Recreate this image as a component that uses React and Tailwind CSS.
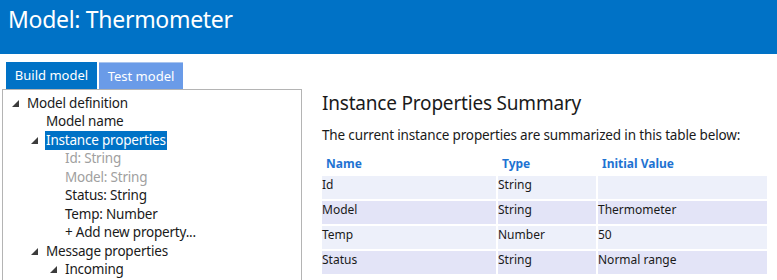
import React from "react";

const font = { fontFamily: '"Noto Sans", "Open Sans", sans-serif' };

function Caret() {
  return (
    <svg width="7" height="7" viewBox="0 0 7 7" className="shrink-0">
      <polygon points="7,0 7,7 0,7" fill="#3c3c3c" />
    </svg>
  );
}

const tree = [
  { label: "Model definition", level: 0, caret: true },
  { label: "Model name", level: 1 },
  { label: "Instance properties", level: 1, caret: true, selected: true },
  { label: "Id: String", level: 2, muted: true },
  { label: "Model: String", level: 2, muted: true },
  { label: "Status: String", level: 2 },
  { label: "Temp: Number", level: 2 },
  { label: "+ Add new property...", level: 2 },
  { label: "Message properties", level: 1, caret: true },
  { label: "Incoming", level: 2, caret: true },
];

const indents = ["pl-[9px]", "pl-[28px]", "pl-[47px]"];

const rows = [
  ["Id", "String", ""],
  ["Model", "String", "Thermometer"],
  ["Temp", "Number", "50"],
  ["Status", "String", "Normal range"],
];

export default function App() {
  return (
    <div className="w-[777px] h-[280px] overflow-hidden bg-white text-[#1a1a1a]" style={font}>
      {/* header bar */}
      <div className="h-[54px] bg-[#0072c6] pl-[8px] pt-[3px]">
        <h1 className="text-[23px] leading-[32px] text-white tracking-[-0.3px]">Model: Thermometer</h1>
      </div>

      <div className="flex">
        {/* left column: tabs + tree */}
        <div className="w-[302px] pl-[2px] pt-[8px]">
          <div className="flex gap-[2px] pl-[4px]">
            <div className="w-[91px] h-[27px] bg-[#0072c6] text-white text-[13px] leading-[27px] text-center">
              Build model
            </div>
            <div className="w-[84px] h-[27px] bg-[#6a9be8] border-t border-[#a9c4ee] text-white text-[13px] leading-[26px] text-center">
              Test model
            </div>
          </div>
          <div className="h-[200px] border border-[#b4b4b4] border-b-0 pt-[4px]">
            {tree.map((n, i) => (
              <div key={i} className={`flex items-center h-[18.5px] ${indents[n.level]}`}>
                <div className="w-[14px] flex items-center">{n.caret && <Caret />}</div>
                <span
                  className={`text-[13.5px] leading-[19px] px-[1px] tracking-[-0.2px] ${
                    n.selected ? "bg-[#0072c6] text-white" : n.muted ? "text-[#a0a0a0]" : "text-[#1a1a1a]"
                  }`}
                >
                  {n.label}
                </span>
              </div>
            ))}
          </div>
        </div>

        {/* right column: summary */}
        <div className="flex-1 pl-[20px] pr-[6px] pt-[36px]">
          <h2 className="text-[19px] leading-[26px] tracking-[-0.2px]">Instance Properties Summary</h2>
          <p className="mt-[10px] text-[13.5px] leading-[18px] tracking-[-0.15px]">
            The current instance properties are summarized in this table below:
          </p>
          <table className="mt-[10px] w-[449px] border-separate border-spacing-[2px] -ml-[2px] text-[12px]">
            <thead>
              <tr className="text-left text-[#1e73d2]">
                <th className="w-[174px] pl-[4px] h-[18px] font-bold leading-[15px] align-top">Name</th>
                <th className="w-[98px] pl-[4px] font-bold leading-[15px] align-top">Type</th>
                <th className="pl-[4px] font-bold leading-[15px] align-top">Initial Value</th>
              </tr>
            </thead>
            <tbody>
              {rows.map((r, i) => (
                <tr key={i} className={i % 2 === 0 ? "bg-[#edf0fa]" : "bg-[#e3e4f7]"}>
                  {r.map((c, j) => (
                    <td key={j} className="h-[23px] align-top pt-[1px] leading-[16px]">
                      {c}
                    </td>
                  ))}
                </tr>
              ))}
            </tbody>
          </table>
        </div>
      </div>
    </div>
  );
}
